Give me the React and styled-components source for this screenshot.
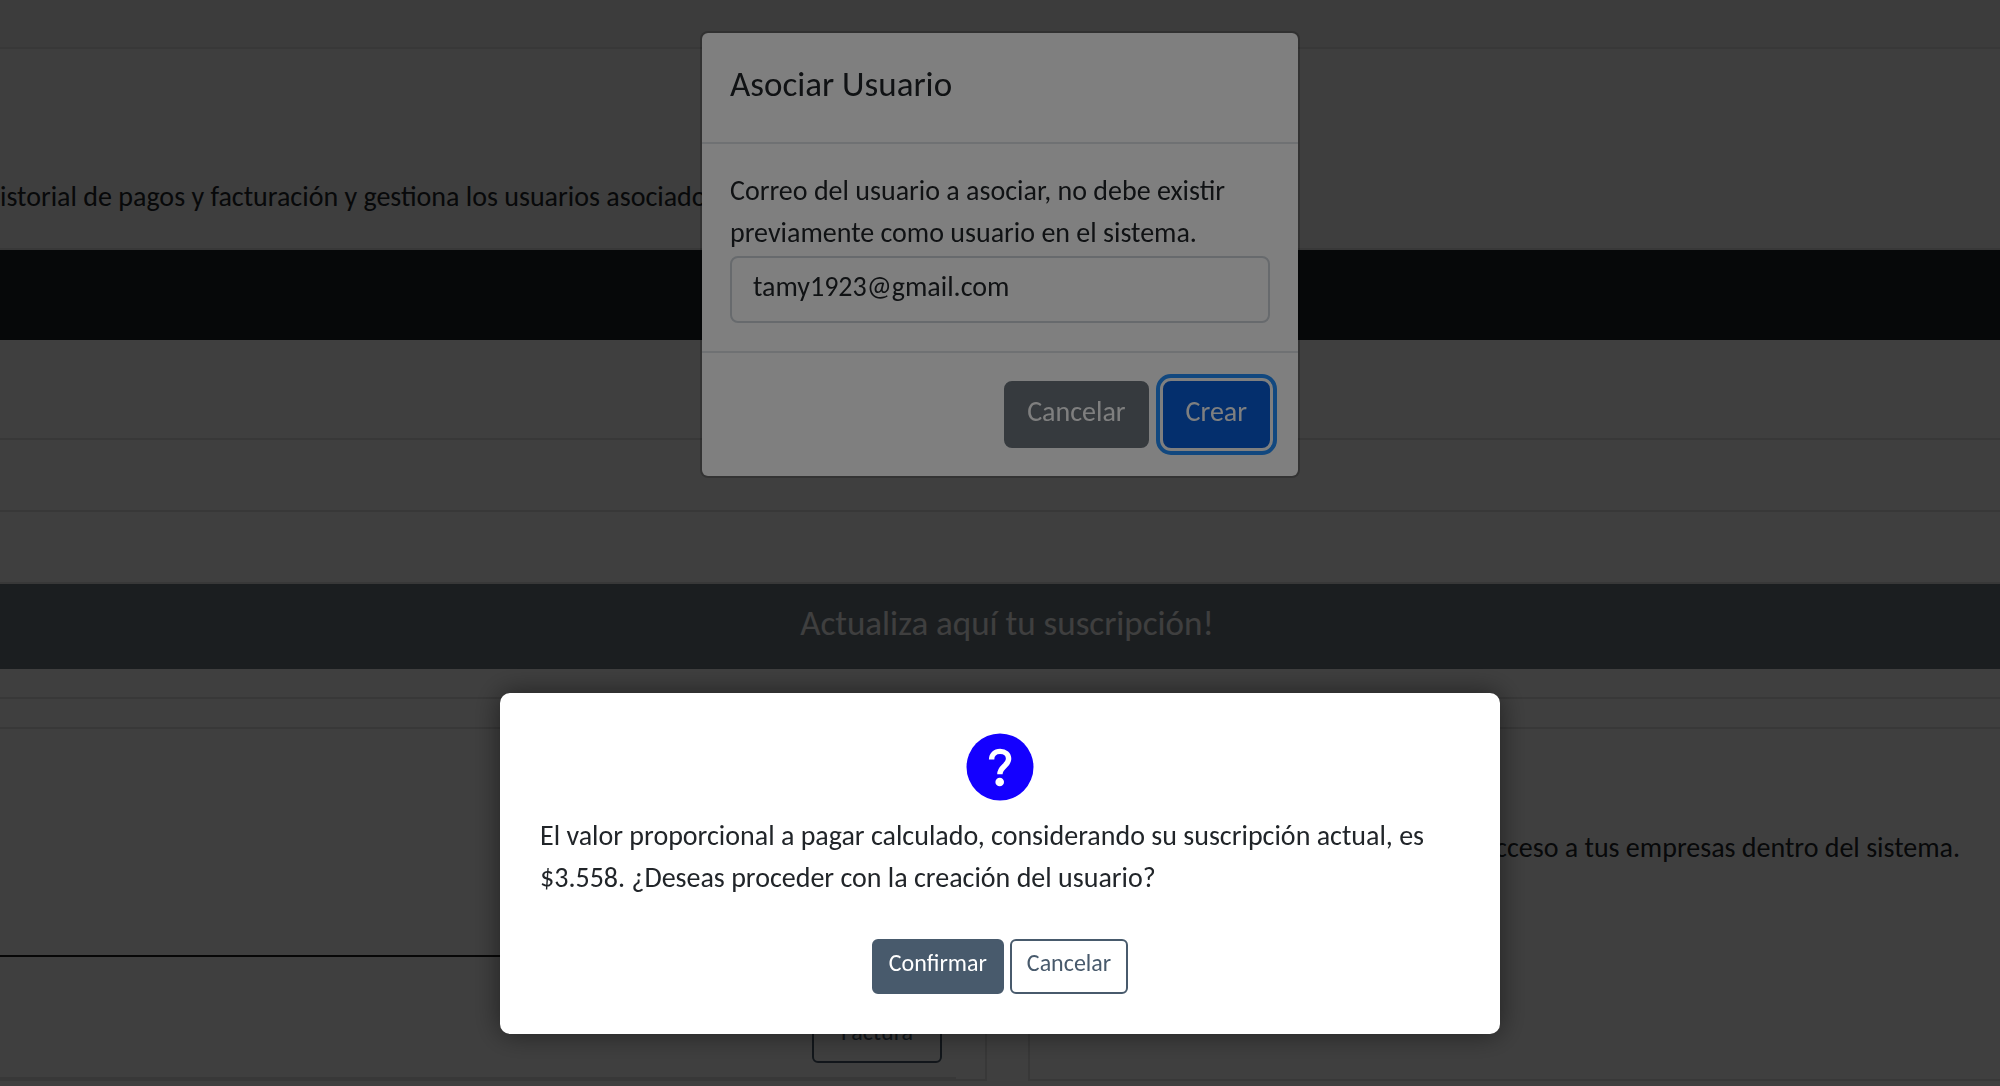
import React from 'react';
import styled, { createGlobalStyle, css } from 'styled-components';

const GlobalStyle = createGlobalStyle`
  *, *::before, *::after { box-sizing: border-box; }
  body {
    margin: 0;
    background: #fff;
    color: #212529;
    font-family: Calibri, Carlito, Lato, sans-serif;
    font-size: 28px;
    line-height: 42px;
  }
  button, input { font: inherit; color: inherit; }
`;

const Page = styled.div`
  height: 100vh;
  overflow: hidden;
`;

const TopStrip = styled.div`
  height: 49px;
  background: #f2f2f2;
  border-bottom: 2px solid #e0e0e0;
`;

const Intro = styled.header`
  padding: 127px 0 30px;
  background: #f8f8f8;
  border-bottom: 2px solid #e0e0e0;
  white-space: nowrap;
`;

const IntroText = styled.p`
  margin: 0;
  color: #212529;
`;

const NavBar = styled.div`
  height: 90px;
  background: #1b2027;
`;

const Row = styled.div`
  height: ${({ $tall }) => ($tall ? 100 : 72)}px;
  border-bottom: 2px solid #e0e0e0;
`;

const Banner = styled.h2`
  margin: 0;
  padding: 13px 0 20px 14px;
  background: #6c7882;
  color: #fff;
  font-size: 35px;
  font-weight: 400;
  line-height: 52px;
  text-align: center;
`;

const BannerFoot = styled.div`
  height: 30px;
  border-bottom: 2px solid #e0e0e0;
`;

const Columns = styled.main`
  display: grid;
  grid-template-columns: 987fr 972fr;
  gap: 41px;
  padding-top: 28px;
  background: #fdfdfd;
`;

const Card = styled.section`
  min-height: 352px;
  background: #fff;
  border: 2px solid #e0e0e0;
  border-left-width: ${({ $first }) => ($first ? 0 : 2)}px;
  border-right-width: ${({ $first }) => ($first ? 2 : 0)}px;
`;

const Invoices = styled.ul`
  list-style: none;
  margin: 226px 29px 0 0;
  padding: 0;
  border-top: 2px solid #1c1c1c;
`;

const Invoice = styled.li`
  display: flex;
  justify-content: flex-end;
  padding: 51px 14px 14px;
  border-bottom: 2px solid #e0e0e0;
`;

const CardText = styled.p`
  margin: 0;
  padding: 98px 40px 0 0;
  text-align: right;
`;

const Backdrop = styled.div`
  position: fixed;
  inset: 0;
  display: flex;
  justify-content: center;
  align-items: ${({ $bottom }) => ($bottom ? 'flex-end' : 'flex-start')};
  padding: 31px 28px ${({ $bottom }) => ($bottom ? 52 : 31)}px;
  background: rgba(0, 0, 0, 0.5);
`;

const Modal = styled.form`
  width: 100%;
  max-width: 600px;
  background: #fff;
  background-clip: padding-box;
  border: 2px solid rgba(0, 0, 0, 0.2);
  border-radius: 8px;
`;

const ModalHeader = styled.header`
  padding: 25px 28px 32px;
  border-bottom: 2px solid #dee2e6;
`;

const ModalTitle = styled.h1`
  margin: 0;
  font-size: 35px;
  font-weight: 400;
  line-height: 52px;
`;

const ModalBody = styled.div`
  padding: 26px 28px 28px;
`;

const Label = styled.label`
  display: block;
  margin-bottom: 2px;
`;

const TextInput = styled.input`
  display: block;
  width: 100%;
  height: 67px;
  padding: 7px 21px 14px;
  background: #fff;
  border: 2px solid #ced4da;
  border-radius: 8px;
  outline: none;
`;

const ModalFooter = styled.footer`
  display: flex;
  justify-content: flex-end;
  gap: 14px;
  padding: 28px;
  border-top: 2px solid #dee2e6;
`;

const tones = {
  gray: css`background: #6c757d; border-color: #6c757d; color: #fff;`,
  blue: css`background: #085fda; border-color: #085fda; color: #fff;`,
  slate: css`background: #485a6c; border-color: #485a6c; color: #fff;`,
  outline: css`background: transparent; border-color: #485a6c; color: #485a6c;`,
};

const Button = styled.button`
  padding: 8px 21px 13px;
  border: 2px solid;
  border-radius: 8px;
  line-height: 42px;
  ${({ $tone }) => tones[$tone]}
  ${({ $focused }) => $focused && css`
    outline: 4px solid #2490ff;
    outline-offset: 3px;
  `}
`;

const SmallButton = styled(Button)`
  padding: 4px ${({ $wide }) => ($wide ? 27 : 15)}px 11px;
  border-radius: 6px;
  font-size: 24px;
  line-height: 36px;
`;

const Dialog = styled.div`
  width: 100%;
  max-width: 1000px;
  padding: 40px;
  background: #fff;
  border-radius: 10px;
  box-shadow: 0 0 28px rgba(0, 0, 0, 0.5);
`;

const DialogIcon = styled.svg`
  display: block;
  width: 68px;
  height: 68px;
  margin: 0 auto 14px;
`;

const DialogText = styled.p`
  margin: 0 0 40px;
`;

const DialogActions = styled.div`
  display: flex;
  justify-content: center;
  gap: 6px;
`;

export default function App() {
  return (
    <>
      <GlobalStyle />
      <Page>
        <TopStrip />
        <Intro>
          <IntroText>istorial de pagos y facturación y gestiona los usuarios asociados</IntroText>
        </Intro>
        <NavBar />
        <Row $tall />
        <Row />
        <Row />
        <Banner>Actualiza aquí tu suscripción!</Banner>
        <BannerFoot />
        <Columns>
          <Card $first>
            <Invoices>
              <Invoice>
                <SmallButton type="button" $tone="outline" $wide>Factura</SmallButton>
              </Invoice>
            </Invoices>
          </Card>
          <Card>
            <CardText>acceso a tus empresas dentro del sistema.</CardText>
          </Card>
        </Columns>
      </Page>

      <Backdrop>
        <Modal role="dialog" aria-labelledby="modal-title" onSubmit={(e) => e.preventDefault()}>
          <ModalHeader>
            <ModalTitle id="modal-title">Asociar Usuario</ModalTitle>
          </ModalHeader>
          <ModalBody>
            <Label htmlFor="email">
              Correo del usuario a asociar, no debe existir previamente como usuario en el sistema.
            </Label>
            <TextInput id="email" type="email" defaultValue="tamy1923@gmail.com" />
          </ModalBody>
          <ModalFooter>
            <Button type="button" $tone="gray">Cancelar</Button>
            <Button type="submit" $tone="blue" $focused>Crear</Button>
          </ModalFooter>
        </Modal>
      </Backdrop>

      <Backdrop $bottom>
        <Dialog role="alertdialog" aria-describedby="dialog-text">
          <DialogIcon viewBox="0 0 68 68" aria-hidden="true">
            <circle cx="34" cy="34" r="33.5" fill="#1400ff" />
            <path
              d="M25.6 26.6C25.6 21.6 29 18.4 34.1 18.4C39.2 18.4 42.6 21.5 42.6 26.1C42.6 32.6 33.9 33.6 33.9 41.2"
              fill="none"
              stroke="#fff"
              strokeWidth="5.4"
            />
            <circle cx="33.7" cy="49" r="4.3" fill="#fff" />
          </DialogIcon>
          <DialogText id="dialog-text">
            El valor proporcional a pagar calculado, considerando su suscripción actual, es $3.558. ¿Deseas
            proceder con la creación del usuario?
          </DialogText>
          <DialogActions>
            <SmallButton type="button" $tone="slate">Confirmar</SmallButton>
            <SmallButton type="button" $tone="outline">Cancelar</SmallButton>
          </DialogActions>
        </Dialog>
      </Backdrop>
    </>
  );
}
